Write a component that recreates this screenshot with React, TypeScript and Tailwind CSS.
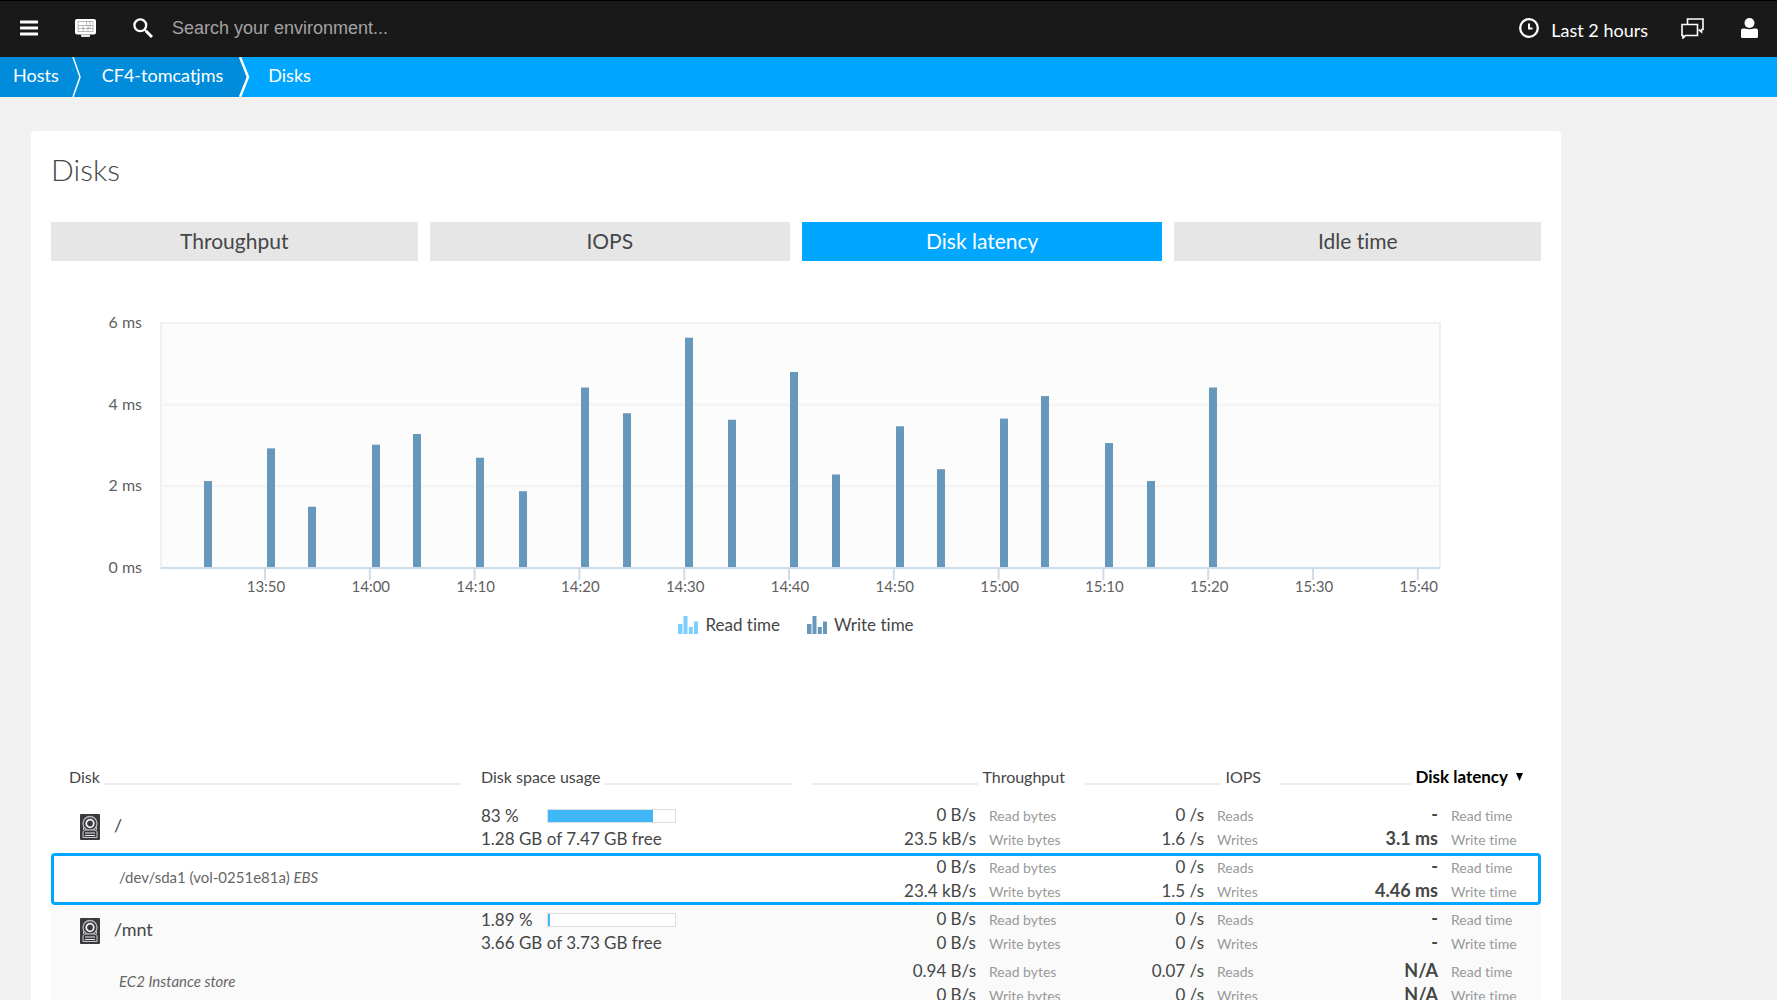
import { clsx } from "clsx";

const MenuIcon = () => (
  <svg viewBox="0 0 18 16" className="h-4 w-[18px]" fill="#fff" aria-hidden="true">
    <rect y="0.5" width="18" height="3" rx="0.5" />
    <rect y="6.5" width="18" height="3" rx="0.5" />
    <rect y="12.5" width="18" height="3" rx="0.5" />
  </svg>
);

const DashboardIcon = () => (
  <svg viewBox="0 0 21 18" className="h-[18px] w-[21px]" aria-hidden="true">
    <rect width="21" height="15.5" rx="2" fill="#fff" />
    <path d="M3 2.5h15M3 6.5h15M3 9.5h15M3 12.5h15M3 2.5v10M11.5 2.5v4M8 6.5v6M13 6.5v6M15 2.5v7M18 2.5v10" fill="none" stroke="#77777c" strokeWidth="0.5" />
    <path d="M6 15.5h9V17q0 1-1 1H7q-1 0-1-1z" fill="#e6e6e6" />
  </svg>
);

const SearchIcon = () => (
  <svg viewBox="0 0 20 20" className="size-5" fill="none" stroke="#fff" aria-hidden="true">
    <circle cx="7.3" cy="7.3" r="5.9" strokeWidth="2.3" />
    <path d="M11.7 11.7l2 2" strokeWidth="2" />
    <path d="M13 13l6 6" strokeWidth="3" />
  </svg>
);

const ClockIcon = () => (
  <svg viewBox="0 0 20 20" className="size-5" fill="none" stroke="#fff" aria-hidden="true">
    <circle cx="10" cy="10" r="8.8" strokeWidth="2.3" />
    <path d="M10 5.5v5h3.5" strokeWidth="2" />
  </svg>
);

const ChatIcon = () => (
  <svg viewBox="0 0 23 21" className="h-[21px] w-[23px]" fill="none" stroke="#fff" strokeWidth="1.6" aria-hidden="true">
    <path d="M6.5 6.5V1H22v10.5h-1.5V14l-3-2.5" />
    <path d="M1 6.5h15.500v11H4.500L2 20v-2.500H1z" />
  </svg>
);

const UserIcon = () => (
  <svg viewBox="0 0 17 20" className="h-5 w-[17px]" fill="#fff" aria-hidden="true">
    <circle cx="8.5" cy="5" r="5" />
    <path d="M0 12.5Q0 10.5 2 10.5h2q4.5 1.5 9 0h2Q17 10.5 17 12.5v6q0 1.5-1.5 1.5h-14Q0 20 0 18.5z" />
  </svg>
);

const DiskIcon = () => (
  <svg viewBox="0 0 20 26" className="h-[26px] w-5 shrink-0" aria-hidden="true">
    <rect width="20" height="26" rx="1" fill="#3c3a3e" />
    <circle cx="10" cy="9.5" r="7" fill="none" stroke="#b9b9bd" strokeWidth="1.3" />
    <path d="M3.5 11v5M16.5 11v5" stroke="#b9b9bd" />
    <circle cx="10" cy="9.5" r="3.8" fill="none" stroke="#f0f0f2" strokeWidth="1.8" />
    <path d="M3 23.5v-6l2-1.500h10l2 1.500v6z" fill="#3c3a3e" stroke="#c9c9cc" />
    <path d="M5 19h10M5 21.500h10" stroke="#e8e8ea" strokeWidth="1.2" />
  </svg>
);

const SeriesIcon = ({ color }: { color: string }) => (
  <svg viewBox="0 0 20 18" className="h-[18px] w-5" fill={color} aria-hidden="true">
    <path d="M0 8h4.500v10H0zM5.500 0h4v18h-4zM10.800 11h4v7h-4zM16 5.500h4V18h-4z" />
  </svg>
);

const tabs = ["Throughput", "IOPS", "Disk latency", "Idle time"];

// [x inside the plot, write time in ms]
const writeTimes = [
  [43, 2.13], [106, 2.93], [147, 1.5], [211, 3.02], [252, 3.28], [315, 2.7], [358, 1.88],
  [420, 4.42], [462, 3.79], [524, 5.64], [567, 3.63], [629, 4.8], [671, 2.29], [735, 3.47],
  [776, 2.42], [839, 3.66], [880, 4.21], [944, 3.06], [986, 2.13], [1048, 4.42],
];

const hours = ["13:50", "14:00", "14:10", "14:20", "14:30", "14:40", "14:50", "15:00", "15:10", "15:20", "15:30", "15:40"];

const PLOT = { left: 110, top: 13, width: 1279, height: 245 };

const LatencyChart = () => {
  const y = (ms: number) => PLOT.top + PLOT.height - ms * (PLOT.height / 6);
  return (
    <svg viewBox="0 0 1490 290" className="mt-[49px] block w-full" role="img" aria-label="Disk latency">
      <rect x={PLOT.left} y={PLOT.top} width={PLOT.width} height={PLOT.height} fill="#fcfcfc" stroke="#f0f0f0" strokeWidth="2" />
      {[2, 4].map((ms) => (
        <path key={ms} d={`M${PLOT.left} ${y(ms)}h${PLOT.width}`} stroke="#f3f3f3" strokeWidth="2" />
      ))}
      {[0, 2, 4, 6].map((ms) => (
        <text key={ms} x="91" y={y(ms) + 5} textAnchor="end" className="fill-[#5f5f5f] text-base">
          {ms} ms
        </text>
      ))}
      {writeTimes.map(([x, ms]) => (
        <rect key={x} x={PLOT.left + x} y={y(ms)} width="8" height={y(0) - y(ms)} fill="#6698bb" />
      ))}
      <path d={`M${PLOT.left} ${y(0)}h${PLOT.width}`} stroke="#cfdde8" strokeWidth="2" />
      {hours.map((hour, i) => {
        const x = PLOT.left + 104 + i * 104.8;
        return (
          <g key={hour}>
            <path d={`M${x} ${y(0)}v12`} stroke="#cfdde8" strokeWidth="2" />
            <text x={x + 1} y={y(0) + 24} textAnchor="middle" className="fill-[#5f5f5f] text-[15px]">
              {hour}
            </text>
          </g>
        );
      })}
    </svg>
  );
};

type Row = {
  name: string;
  kind?: string;
  device?: boolean;
  usage?: { percent: string; fill: number; free: string };
  throughput: [string, string];
  iops: [string, string];
  latency: [string, string];
  tone?: "selected" | "shaded";
};

const rows: Row[] = [
  {
    name: "/",
    usage: { percent: "83 %", fill: 83, free: "1.28 GB of 7.47 GB free" },
    throughput: ["0 B/s", "23.5 kB/s"],
    iops: ["0 /s", "1.6 /s"],
    latency: ["-", "3.1 ms"],
  },
  {
    name: "/dev/sda1 (vol-0251e81a)",
    kind: "EBS",
    device: true,
    throughput: ["0 B/s", "23.4 kB/s"],
    iops: ["0 /s", "1.5 /s"],
    latency: ["-", "4.46 ms"],
    tone: "selected",
  },
  {
    name: "/mnt",
    usage: { percent: "1.89 %", fill: 1.89, free: "3.66 GB of 3.73 GB free" },
    throughput: ["0 B/s", "0 B/s"],
    iops: ["0 /s", "0 /s"],
    latency: ["-", "-"],
    tone: "shaded",
  },
  {
    name: "",
    kind: "EC2 Instance store",
    device: true,
    throughput: ["0.94 B/s", "0 B/s"],
    iops: ["0.07 /s", "0 /s"],
    latency: ["N/A", "N/A"],
    tone: "shaded",
  },
];

type MetricProps = { values: [string, string]; labels: [string, string]; labelWidth: string; strong?: boolean };

const MetricCell = ({ values, labels, labelWidth, strong }: MetricProps) => (
  <td className="p-0">
    {values.map((value, i) => (
      <div key={labels[i]} className="flex items-baseline leading-[23px] whitespace-nowrap">
        <span className={clsx("flex-1 pr-[13px] text-right leading-[23px]", strong ? "text-lg font-bold" : "text-[17px]")}>
          {value}
        </span>
        <span className={clsx("text-sm leading-[23px] text-[#999999]", labelWidth)}>{labels[i]}</span>
      </div>
    ))}
  </td>
);

const Line = () => <span className="mb-1 h-[2px] flex-1 self-end bg-[#ececec]" />;

const App = () => {
  return (
    <div className="flex h-screen flex-col overflow-hidden bg-[#f1f1f1] font-['Lato',sans-serif] text-[#454646] [font-variant-ligatures:none]">
      <header className="flex h-[57px] shrink-0 items-center border-t border-black bg-[#191919] pr-[19px] pb-0.5 pl-5 text-white">
        <button aria-label="Menu"><MenuIcon /></button>
        <button aria-label="Dashboards" className="ml-[37px]"><DashboardIcon /></button>
        <label htmlFor="search" aria-label="Search" className="ml-[37px]"><SearchIcon /></label>
        <input
          id="search"
          type="text"
          placeholder="Search your environment..."
          className="ml-[19px] min-w-0 flex-1 bg-transparent font-['Liberation_Sans',sans-serif] text-lg outline-none placeholder:text-[#a5a2a5]"
        />
        <button className="flex items-center gap-3 text-lg"><ClockIcon /><span className="pt-1">Last 2 hours</span></button>
        <button aria-label="Chat" className="ml-[33px]"><ChatIcon /></button>
        <button aria-label="User" className="ml-[37px]"><UserIcon /></button>
      </header>

      <nav aria-label="Breadcrumb" className="flex h-10 shrink-0 bg-[#00a6ff] text-lg text-white">
        <a href="#hosts" className="flex items-center bg-[#008cdb] pr-[13px] pb-1 pl-[13px]">Hosts</a>
        <svg viewBox="0 0 10 40" className="h-10 w-2.5 bg-[#008cdb]" fill="none" aria-hidden="true">
          <path d="M1 0l7 20-7 20" stroke="#fff" strokeWidth="1.5" />
        </svg>
        <a href="#host" className="flex items-center bg-[#008cdb] pr-[16px] pb-1 pl-[20px]">CF4-tomcatjms</a>
        <svg viewBox="0 0 11 40" className="h-10 w-[11px]" aria-hidden="true">
          <path d="M0 0h1l8 20-8 20H0z" fill="#008cdb" />
          <path d="M1 0l8 20-8 20" fill="none" stroke="#fff" strokeWidth="2.5" />
        </svg>
        <a href="#disks" className="flex items-center pb-1 pl-[18px]">Disks</a>
      </nav>

      <main className="mt-[34px] mr-[216px] ml-[31px] flex-1 rounded-t-sm bg-white px-5">
        <h1 className="pt-5 text-3xl font-light">Disks</h1>

        <div role="tablist" className="mt-[35px] grid grid-cols-[366fr_360fr_360fr_366fr] gap-3">
          {tabs.map((tab) => (
            <button
              key={tab}
              role="tab"
              aria-selected={tab === "Disk latency"}
              className={clsx("h-[39px] pb-0.5 text-[21px]", tab === "Disk latency" ? "bg-[#00a6ff] text-white" : "bg-[#e6e6e6]")}
            >
              {tab}
            </button>
          ))}
        </div>

        <LatencyChart />

        <div className="mt-[13px] flex items-center justify-center gap-[27px] text-[17px] leading-6">
          <button className="flex items-center gap-[7px]"><SeriesIcon color="#7cd0ff" />Read time</button>
          <button className="flex items-center gap-[7px]"><SeriesIcon color="#6698bb" />Write time</button>
        </div>

        <table className="mt-32 w-full table-fixed border-collapse text-left">
          <colgroup>
            <col className="w-[420px]" />
            <col className="w-[331px]" />
            <col className="w-[273px]" />
            <col className="w-[196px]" />
            <col className="w-[270px]" />
          </colgroup>
          <thead className="text-base leading-6">
            <tr>
              <th className="p-0 pb-3 font-normal">
                <div className="flex gap-1 pr-2.5 pl-[18px]">Disk<Line /></div>
              </th>
              <th className="p-0 pb-3 font-normal">
                <div className="flex gap-1 px-2.5">Disk space usage<Line /></div>
              </th>
              <th className="p-0 pb-3 font-normal">
                <div className="flex gap-1 px-2.5"><Line />Throughput</div>
              </th>
              <th className="p-0 pb-3 font-normal">
                <div className="flex gap-1 px-2.5"><Line />IOPS</div>
              </th>
              <th className="p-0 pb-3 font-bold text-black" aria-sort="descending">
                <div className="flex gap-1 pr-[18px] pl-2.5">
                  <Line />
                  <button className="flex items-center gap-2 text-[17px]">
                    Disk latency
                    <svg viewBox="0 0 7 8" className="h-2 w-[7px]" aria-hidden="true"><path d="M0 0h7L3.5 8z" /></svg>
                  </button>
                </div>
              </th>
            </tr>
          </thead>
          <tbody>
            {rows.map((row) => (
              <tr
                key={row.name + row.kind}
                className={clsx(
                  "h-[52px]",
                  row.tone === "selected" && "rounded-sm outline-3 -outline-offset-3 outline-[#00a6ff]",
                  row.tone === "shaded" && "bg-[#fafafa]"
                )}
              >
                <td className="p-0">
                  {row.device ? (
                    <div className="pb-1 pl-[68px] text-[15px] text-[#666666]">{row.name} <i>{row.kind}</i></div>
                  ) : (
                    <div className="flex gap-[14px] pl-[29px] text-lg leading-[22px]"><DiskIcon />{row.name}</div>
                  )}
                </td>
                <td className="p-0 pl-2.5 text-[17px] leading-[23px]">
                  {row.usage && (
                    <>
                      <div className="flex items-center">
                        <span className="w-[66px]">{row.usage.percent}</span>
                        <div className="h-[14px] w-[129px] border border-[#dedede] bg-white">
                          <div className="h-full bg-[#40b7f8]" style={{ width: `${row.usage.fill}%` }} />
                        </div>
                      </div>
                      <div>{row.usage.free}</div>
                    </>
                  )}
                </td>
                <MetricCell values={row.throughput} labels={["Read bytes", "Write bytes"]} labelWidth="w-[86px]" />
                <MetricCell values={row.iops} labels={["Reads", "Writes"]} labelWidth="w-[54px]" />
                <MetricCell values={row.latency} labels={["Read time", "Write time"]} labelWidth="w-[90px]" strong />
              </tr>
            ))}
          </tbody>
        </table>
      </main>
    </div>
  );
};

export default App;
